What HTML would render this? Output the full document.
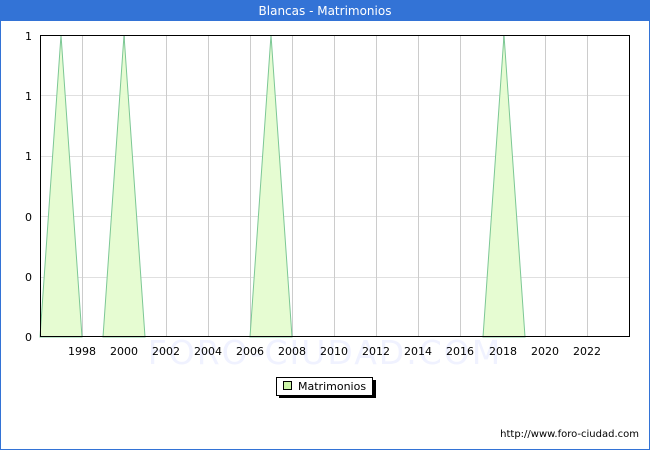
<!DOCTYPE html>
<html><head><style>
body{margin:0;width:650px;height:450px;overflow:hidden;font-family:"DejaVu Sans","Liberation Sans",sans-serif;}
.frame{position:absolute;left:0;top:0;width:648px;height:448px;border:1px solid #3373d6;background:#fff;}
.title{position:absolute;left:0;top:0;width:650px;height:21px;background:#3373d6;color:#fff;font-size:12px;text-align:center;line-height:23px;}
</style></head><body>
<div class="frame"></div>
<div class="title">Blancas - Matrimonios</div>
<svg width="650" height="450" style="position:absolute;left:0;top:0" font-family="DejaVu Sans, Liberation Sans, sans-serif" font-size="11">
<text x="325" y="364" text-anchor="middle" font-size="33" fill="#f0f2ff" letter-spacing="2">FORO-CIUDAD.COM</text>
<g stroke="#e0e0e0" stroke-width="1">
<line x1="40" y1="95.5" x2="630" y2="95.5"/><line x1="40" y1="156.5" x2="630" y2="156.5"/>
<line x1="40" y1="216.5" x2="630" y2="216.5"/><line x1="40" y1="277.5" x2="630" y2="277.5"/>
</g>
<g stroke="#cccccc" stroke-width="1">
<line x1="82.5" y1="35" x2="82.5" y2="337"/><line x1="124.5" y1="35" x2="124.5" y2="337"/>
<line x1="166.5" y1="35" x2="166.5" y2="337"/><line x1="208.5" y1="35" x2="208.5" y2="337"/>
<line x1="250.5" y1="35" x2="250.5" y2="337"/><line x1="292.5" y1="35" x2="292.5" y2="337"/>
<line x1="334.5" y1="35" x2="334.5" y2="337"/><line x1="376.5" y1="35" x2="376.5" y2="337"/>
<line x1="418.5" y1="35" x2="418.5" y2="337"/><line x1="460.5" y1="35" x2="460.5" y2="337"/>
<line x1="503.5" y1="35" x2="503.5" y2="337"/><line x1="545.5" y1="35" x2="545.5" y2="337"/>
<line x1="587.5" y1="35" x2="587.5" y2="337"/>
</g>
<g fill="#e6fcd2" stroke="#7cc795" stroke-width="1">
<polygon points="40,337 61,35 82,337"/>
<polygon points="103,337 124,35 145,337"/>
<polygon points="250,337 271,35 292,337"/>
<polygon points="483,337 504,35 525,337"/>
</g>
<rect x="40.5" y="35.5" width="589" height="301" fill="none" stroke="#000"/>
<g text-anchor="end">
<text x="32" y="40">1</text><text x="32" y="100">1</text><text x="32" y="160">1</text>
<text x="32" y="221">0</text><text x="32" y="281">0</text><text x="32" y="341">0</text>
</g>
<g text-anchor="middle">
<text x="82" y="355">1998</text><text x="124" y="355">2000</text><text x="166" y="355">2002</text>
<text x="208" y="355">2004</text><text x="250" y="355">2006</text><text x="292" y="355">2008</text>
<text x="334" y="355">2010</text><text x="376" y="355">2012</text><text x="418" y="355">2014</text>
<text x="460" y="355">2016</text><text x="503" y="355">2018</text><text x="545" y="355">2020</text>
<text x="587" y="355">2022</text>
</g>
<rect x="279" y="380" width="97" height="18" fill="#000"/>
<rect x="276.5" y="377.5" width="96" height="18" fill="#fff" stroke="#000"/>
<rect x="283.5" y="381.5" width="8" height="8" fill="#ccf5a8" stroke="#000"/>
<text x="298" y="390">Matrimonios</text>
<text x="639" y="437" text-anchor="end" font-size="10">http://www.foro-ciudad.com</text>
</svg>
</body></html>
